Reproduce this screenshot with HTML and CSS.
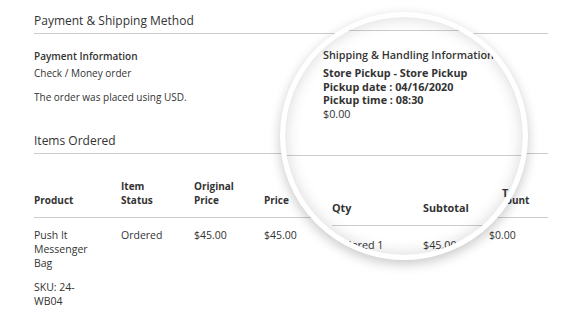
FILE: index.html
```html
<!DOCTYPE html>
<html lang="en">
<head>
  <meta charset="UTF-8">
  <meta name="viewport" content="width=device-width, initial-scale=1">
  <title>Order View</title>
  <link rel="stylesheet" href="styles.css">
</head>
<body>

  <div class="page">
    <h2 class="block-title">Payment &amp; Shipping Method</h2>

    <div class="payment">
      <div class="box-title">Payment Information</div>
      <div class="box-line">Check / Money order</div>
      <div class="box-note">The order was placed using USD.</div>
    </div>

    <h2 class="block-title items-title">Items Ordered</h2>

    <table class="items">
      <colgroup>
        <col style="width: 87px">
        <col style="width: 73px">
        <col style="width: 70px">
        <col style="width: 74px">
        <col style="width: 80px">
        <col style="width: 71px">
        <col style="width: 59px">
      </colgroup>
      <thead>
        <tr>
          <th>Product</th>
          <th>Item Status</th>
          <th>Original Price</th>
          <th>Price</th>
          <th>Qty</th>
          <th>Subtotal</th>
          <th>Tax Amount</th>
        </tr>
      </thead>
      <tbody>
        <tr>
          <td>
            <div>Push It Messenger Bag</div>
            <div class="sku">SKU: 24-WB04</div>
          </td>
          <td>Ordered</td>
          <td>$45.00</td>
          <td>$45.00</td>
          <td>Ordered 1</td>
          <td>$45.00</td>
          <td>$0.00</td>
        </tr>
      </tbody>
    </table>
  </div>

  <!-- magnifier over the shipping column -->
  <div class="lens">
    <div class="lens-view">
      <div class="lens-rule"></div>
      <div class="shipping">
        <div class="ship-title">Shipping &amp; Handling Information</div>
        <div class="ship-method">
          <strong>Store Pickup - Store Pickup</strong>
          <strong>Pickup date : 04/16/2020</strong>
          <strong>Pickup time : 08:30</strong>
          <span>$0.00</span>
        </div>
      </div>
      <div class="lens-rule lens-rule-bottom"></div>
      <table class="lens-items">
        <colgroup>
          <col style="width: 91px">
          <col style="width: 79px">
          <col style="width: 60px">
        </colgroup>
        <thead>
          <tr>
            <th>Qty</th>
            <th>Subtotal</th>
            <th>Tax Amount</th>
          </tr>
        </thead>
        <tbody>
          <tr>
            <td>Ordered 1</td>
            <td>$45.00</td>
            <td>$0.00</td>
          </tr>
        </tbody>
      </table>
    </div>
  </div>

</body>
</html>
```

FILE: styles.css
```css
body {
  font-family: "Open Sans", Arial, sans-serif;
  color: #333;
  background: #fff;
  margin: 0;
  padding: 0;
}
.page {
  width: 514px;
  padding: 0 26px 0 34px;
}
.block-title {
  font-size: 12px;
  font-weight: 400;
  line-height: 18px;
  margin: 0;
  padding: 12px 0 3px;
  border-bottom: 1px solid #ccc;
}
.items-title {
  margin-top: 28px;
  padding-top: 0;
}
.payment {
  font-size: 10px;
  line-height: 14px;
}
.box-title {
  font-weight: 600;
  margin-top: 15px;
}
.box-line {
  margin-top: 3px;
}
.box-note {
  margin-top: 10px;
}
.items {
  width: 514px;
  table-layout: fixed;
  border-collapse: collapse;
  margin-top: 25px;
}
.items th {
  font-size: 10px;
  font-weight: 700;
  line-height: 14px;
  text-align: left;
  vertical-align: bottom;
  padding: 0 22px 10px 0;
  border-bottom: 1px solid #ccc;
}
.items td {
  font-size: 10.5px;
  line-height: 14px;
  vertical-align: top;
  padding: 10px 22px 0 0;
}
.sku {
  margin-top: 10px;
}

/* magnifier */
.lens {
  position: absolute;
  left: 280px;
  top: 12px;
  width: 248px;
  height: 248px;
  box-sizing: border-box;
  border: 5px solid #fff;
  border-radius: 50%;
  overflow: hidden;
  background: #fff;
  box-shadow: 0 4px 12px rgba(0,0,0,0.22);
}
.lens::after {
  content: '';
  position: absolute;
  top: 0;
  right: 0;
  bottom: 0;
  left: 0;
  border-radius: 50%;
  box-shadow: inset 0 0 16px rgba(0,0,0,0.16);
}
.lens-view {
  width: 360px;
  margin-left: -40px;
  padding-left: 78px;
  box-sizing: border-box;
}
.lens-rule {
  height: 13px;
  margin-left: -78px;
  border-bottom: 1px solid #ccc;
}
.shipping {
  font-size: 10.8px;
}
.ship-title {
  font-weight: 600;
  line-height: 15px;
  margin-top: 16px;
  white-space: nowrap;
}
.ship-method {
  margin-top: 4px;
  line-height: 13.6px;
}
.ship-method strong,
.ship-method span {
  display: block;
  font-weight: 700;
}
.ship-method span {
  font-weight: 400;
}
.lens-rule-bottom {
  height: 0;
  margin-top: 35px;
}
.lens-items {
  table-layout: fixed;
  border-collapse: collapse;
  margin: 30px 0 0 9px;
  width: 230px;
  font-size: 10.8px;
}
.lens-items th {
  font-weight: 700;
  line-height: 14.5px;
  text-align: left;
  vertical-align: bottom;
  padding: 0 16px 10px 0;
  border-bottom: 1px solid #ccc;
}
.lens-items th:last-child {
  padding-right: 16px;
  width: 30px;
}
.lens-items td {
  line-height: 14.5px;
  padding: 12px 0 0 0;
  white-space: nowrap;
}
```
